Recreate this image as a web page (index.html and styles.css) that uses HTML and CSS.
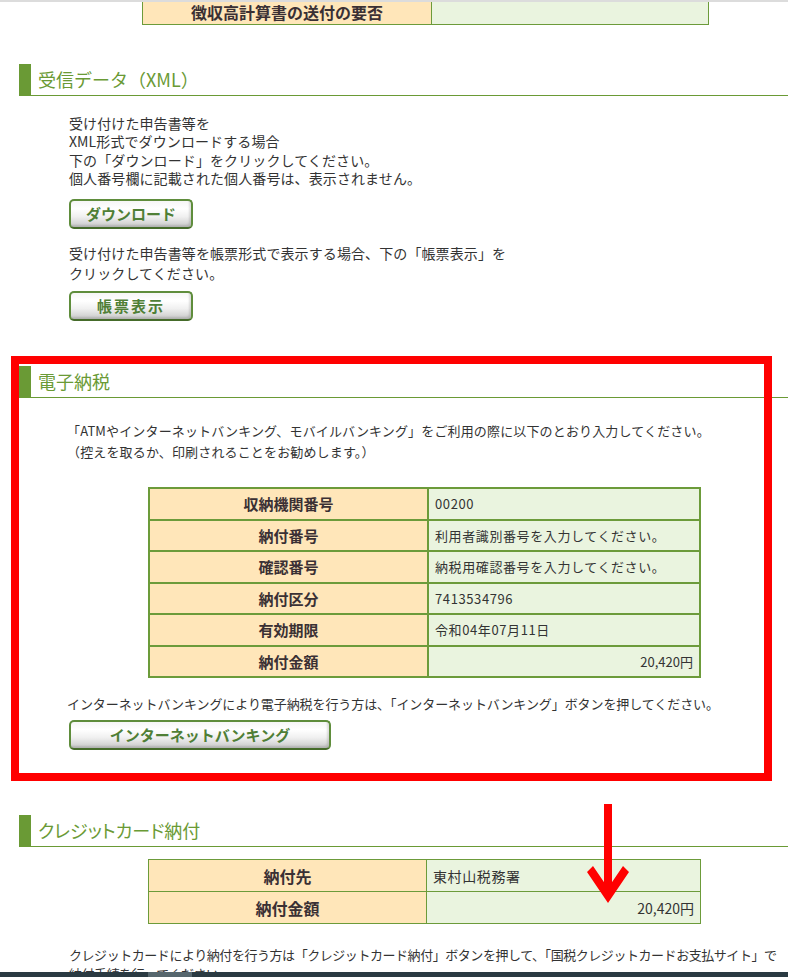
FILE: index.html
```html
<!DOCTYPE html>
<html lang="ja">
<head>
  <meta charset="UTF-8">
  <title>電子納税</title>
  <link rel="stylesheet" href="styles.css">
</head>
<body>
  <div class="topline"></div>

  <table class="info info-top">
    <tr>
      <th>徴収高計算書の送付の要否</th>
      <td></td>
    </tr>
  </table>

  <h2 class="sec-title first">受信データ（XML）</h2>
  <div class="sec-body">
    <p class="note xml-note">受け付けた申告書等を<br>XML形式でダウンロードする場合<br>下の「ダウンロード」をクリックしてください。<br>個人番号欄に記載された個人番号は、表示されません。</p>
    <button class="img-btn">ダウンロード</button>
    <p class="note form-note">受け付けた申告書等を帳票形式で表示する場合、下の「帳票表示」を<br>クリックしてください。</p>
    <button class="img-btn wide-letters">帳票表示</button>
  </div>

  <h2 class="sec-title tax">電子納税</h2>
  <div class="sec-body">
    <p class="note lead">「ATMやインターネットバンキング、モバイルバンキング」をご利用の際に以下のとおり入力してください。<br>（控えを取るか、印刷されることをお勧めします。）</p>
    <table class="info info-pay">
      <tr><th>収納機関番号</th><td>00200</td></tr>
      <tr><th>納付番号</th><td>利用者識別番号を入力してください。</td></tr>
      <tr><th>確認番号</th><td>納税用確認番号を入力してください。</td></tr>
      <tr><th>納付区分</th><td>7413534796</td></tr>
      <tr><th>有効期限</th><td>令和04年07月11日</td></tr>
      <tr><th>納付金額</th><td class="amount">20,420円</td></tr>
    </table>
    <p class="note bank-note">インターネットバンキングにより電子納税を行う方は、「インターネットバンキング」ボタンを押してください。</p>
    <button class="img-btn long">インターネットバンキング</button>
  </div>

  <h2 class="sec-title card">クレジットカード納付</h2>
  <div class="sec-body">
    <table class="info info-card">
      <tr><th>納付先</th><td>東村山税務署</td></tr>
      <tr><th>納付金額</th><td class="amount">20,420円</td></tr>
    </table>
    <p class="note card-note">クレジットカードにより納付を行う方は「クレジットカード納付」ボタンを押して、「国税クレジットカードお支払サイト」で<br>納付手続を行ってください。</p>
  </div>

  <!-- annotations drawn over the page -->
  <div class="mark-box"></div>
  <svg class="mark-arrow" width="44" height="102" viewBox="0 0 44 102">
    <rect x="17" y="0" width="8" height="92" fill="#ff0000"/>
    <polygon points="0,68 6,62 21,84 36,62 42,68 21,99" fill="#ff0000"/>
  </svg>

  <div class="taskbar"><span class="task"></span></div>
</body>
</html>
```

FILE: styles.css
```css
body {
  margin: 0;
  font-family: "Noto Sans CJK JP", "Noto Sans", sans-serif;
  font-size: 13px;
  color: #333;
  background: #fff;
  position: relative;
  min-height: 977px;
  overflow: hidden;
}
.topline {
  height: 2px;
  background: #dcdcdc;
}

/* tables */
.info {
  border-collapse: collapse;
  font-size: 13px;
}
.info th {
  background: #ffe6b9;
  font-weight: bold;
  color: #3a3034;
  text-align: center;
}
.info td {
  background: #eaf4df;
  text-align: left;
  padding-left: 6px;
}
.info td.amount {
  text-align: right;
  padding-right: 6px;
  letter-spacing: 0;
}
.info-top {
  margin-left: 142px;
  width: 567px;
}
.info-top th, .info-top td {
  border: 1px solid #6c9b3a;
  border-top: none;
  height: 20px;
  line-height: 18px;
  padding: 0 0 2px;
}
.info-top th { width: 288px; font-size: 16px; }

.info-pay, .info-card {
  margin-left: 79px;
  width: 553px;
}
.info-pay th, .info-pay td {
  border: 2px solid #6c9b3a;
  height: 29.5px;
  padding-top: 0;
  padding-bottom: 0;
}
.info-pay th { width: 275px; font-size: 15px; }
.info-pay td { letter-spacing: 0.6px; }
.info-card {
  margin-top: 12px;
}
.info-card th, .info-card td {
  border: 1px solid #6c9b3a;
  height: 31px;
  padding-top: 0;
  padding-bottom: 0;
}
.info-card th { width: 275px; font-size: 16px; }
.info-card td { font-size: 14px; letter-spacing: 0.6px; }

/* section headings */
.sec-title {
  margin: 0 0 0 19px;
  height: 31px;
  line-height: 31px;
  padding-left: 7px;
  border-left: 12px solid #6a9a35;
  border-bottom: 1px solid #6a9a35;
  color: #6a9a35;
  font-size: 18px;
  font-weight: normal;
}
.sec-title.first { margin-top: 39px; }
.sec-title.tax { margin-top: 45px; }
.sec-title.card {
  margin-top: 65px;
  font-feature-settings: "palt";
}

.sec-body {
  padding-left: 69px;
}

.note {
  margin: 0;
  line-height: 18.3px;
}
.xml-note {
  margin-top: 18px;
  font-size: 14px;
  letter-spacing: 0.1px;
}
.form-note {
  margin-top: 14px;
  font-size: 14px;
  line-height: 20px;
  letter-spacing: 0.1px;
}
.lead {
  margin: 22px 0 25px -2px;
  line-height: 21px;
  letter-spacing: 0.15px;
}
.bank-note {
  margin: 17px 0 7px -2px;
  letter-spacing: -0.08px;
}
.card-note {
  margin-top: 22px;
  letter-spacing: -0.45px;
  white-space: nowrap;
}

/* image-like buttons */
.img-btn {
  display: block;
  width: 124px;
  height: 30px;
  margin-top: 12px;
  padding: 0;
  border: 2px solid #5f8d3c;
  border-bottom-color: #456b2a;
  border-radius: 5px;
  background: linear-gradient(to bottom, #f6f6f6 0%, #ffffff 30%, #f0f0f0 60%, #c8c8c8 100%);
  box-shadow: inset -2px -2px 2px rgba(0, 0, 0, 0.12);
  color: #4f7f36;
  font-family: "Noto Sans CJK JP", sans-serif;
  font-size: 15px;
  font-weight: bold;
  line-height: 24px;
  cursor: pointer;
}
.wide-letters { letter-spacing: 2px; margin-top: 8px; }
.long { width: 262px; margin-top: 0; }

/* overlays */
.mark-box {
  position: absolute;
  left: 11px;
  top: 356px;
  width: 745px;
  height: 409px;
  border: 8px solid #ff0000;
}
.mark-arrow {
  position: absolute;
  left: 587px;
  top: 804px;
}
.taskbar {
  position: absolute;
  left: 0;
  top: 972px;
  width: 100%;
  height: 5px;
  background: #2a3a42;
}
.task {
  display: block;
  margin-left: 148px;
  width: 44px;
  height: 5px;
  background: #56666d;
}
```
